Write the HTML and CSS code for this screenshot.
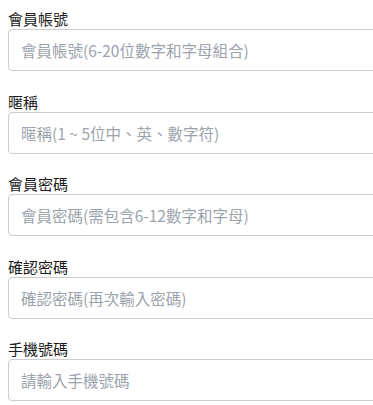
FILE: index.html
```html
<!DOCTYPE html>
<html lang="zh-Hant">
<head>
    <meta charset="UTF-8">
    <meta name="viewport" content="width=device-width, initial-scale=1.0">
    <title>會員註冊</title>
    <link rel="stylesheet" href="styles.css">
</head>
<body>
    <form class="register-form">
        <div class="form-group">
            <label for="account">會員帳號</label>
            <input type="text" id="account" placeholder="會員帳號(6-20位數字和字母組合)">
        </div>
        <div class="form-group">
            <label for="nickname">暱稱</label>
            <input type="text" id="nickname" placeholder="暱稱(1 ~ 5位中、英、數字符)">
        </div>
        <div class="form-group">
            <label for="password">會員密碼</label>
            <input type="password" id="password" placeholder="會員密碼(需包含6-12數字和字母)">
        </div>
        <div class="form-group">
            <label for="confirm">確認密碼</label>
            <input type="password" id="confirm" placeholder="確認密碼(再次輸入密碼)">
        </div>
        <div class="form-group">
            <label for="phone">手機號碼</label>
            <input type="tel" id="phone" placeholder="請輸入手機號碼">
        </div>
    </form>
</body>
</html>
```

FILE: styles.css
```css
html {
    overflow: hidden;
}

body {
    margin: 0;
    padding: 8px 0 0 8px;
    background: #fff;
    font-family: "Noto Sans CJK TC", "Noto Sans", sans-serif;
    overflow: hidden;
}

.register-form {
    width: 400px;
}

.form-group {
    margin-bottom: 19.5px;
}

.form-group label {
    display: block;
    font-size: 15px;
    line-height: 21px;
    color: #1a1a1a;
}

.form-group input {
    display: block;
    width: 100%;
    height: 42px;
    box-sizing: border-box;
    padding: 0 12px;
    border: 1px solid #ccc;
    border-radius: 4px;
    font-family: inherit;
    font-size: 15.5px;
    color: #333;
    outline: none;
}

.form-group input::placeholder {
    color: #9ca3ad;
}
```
